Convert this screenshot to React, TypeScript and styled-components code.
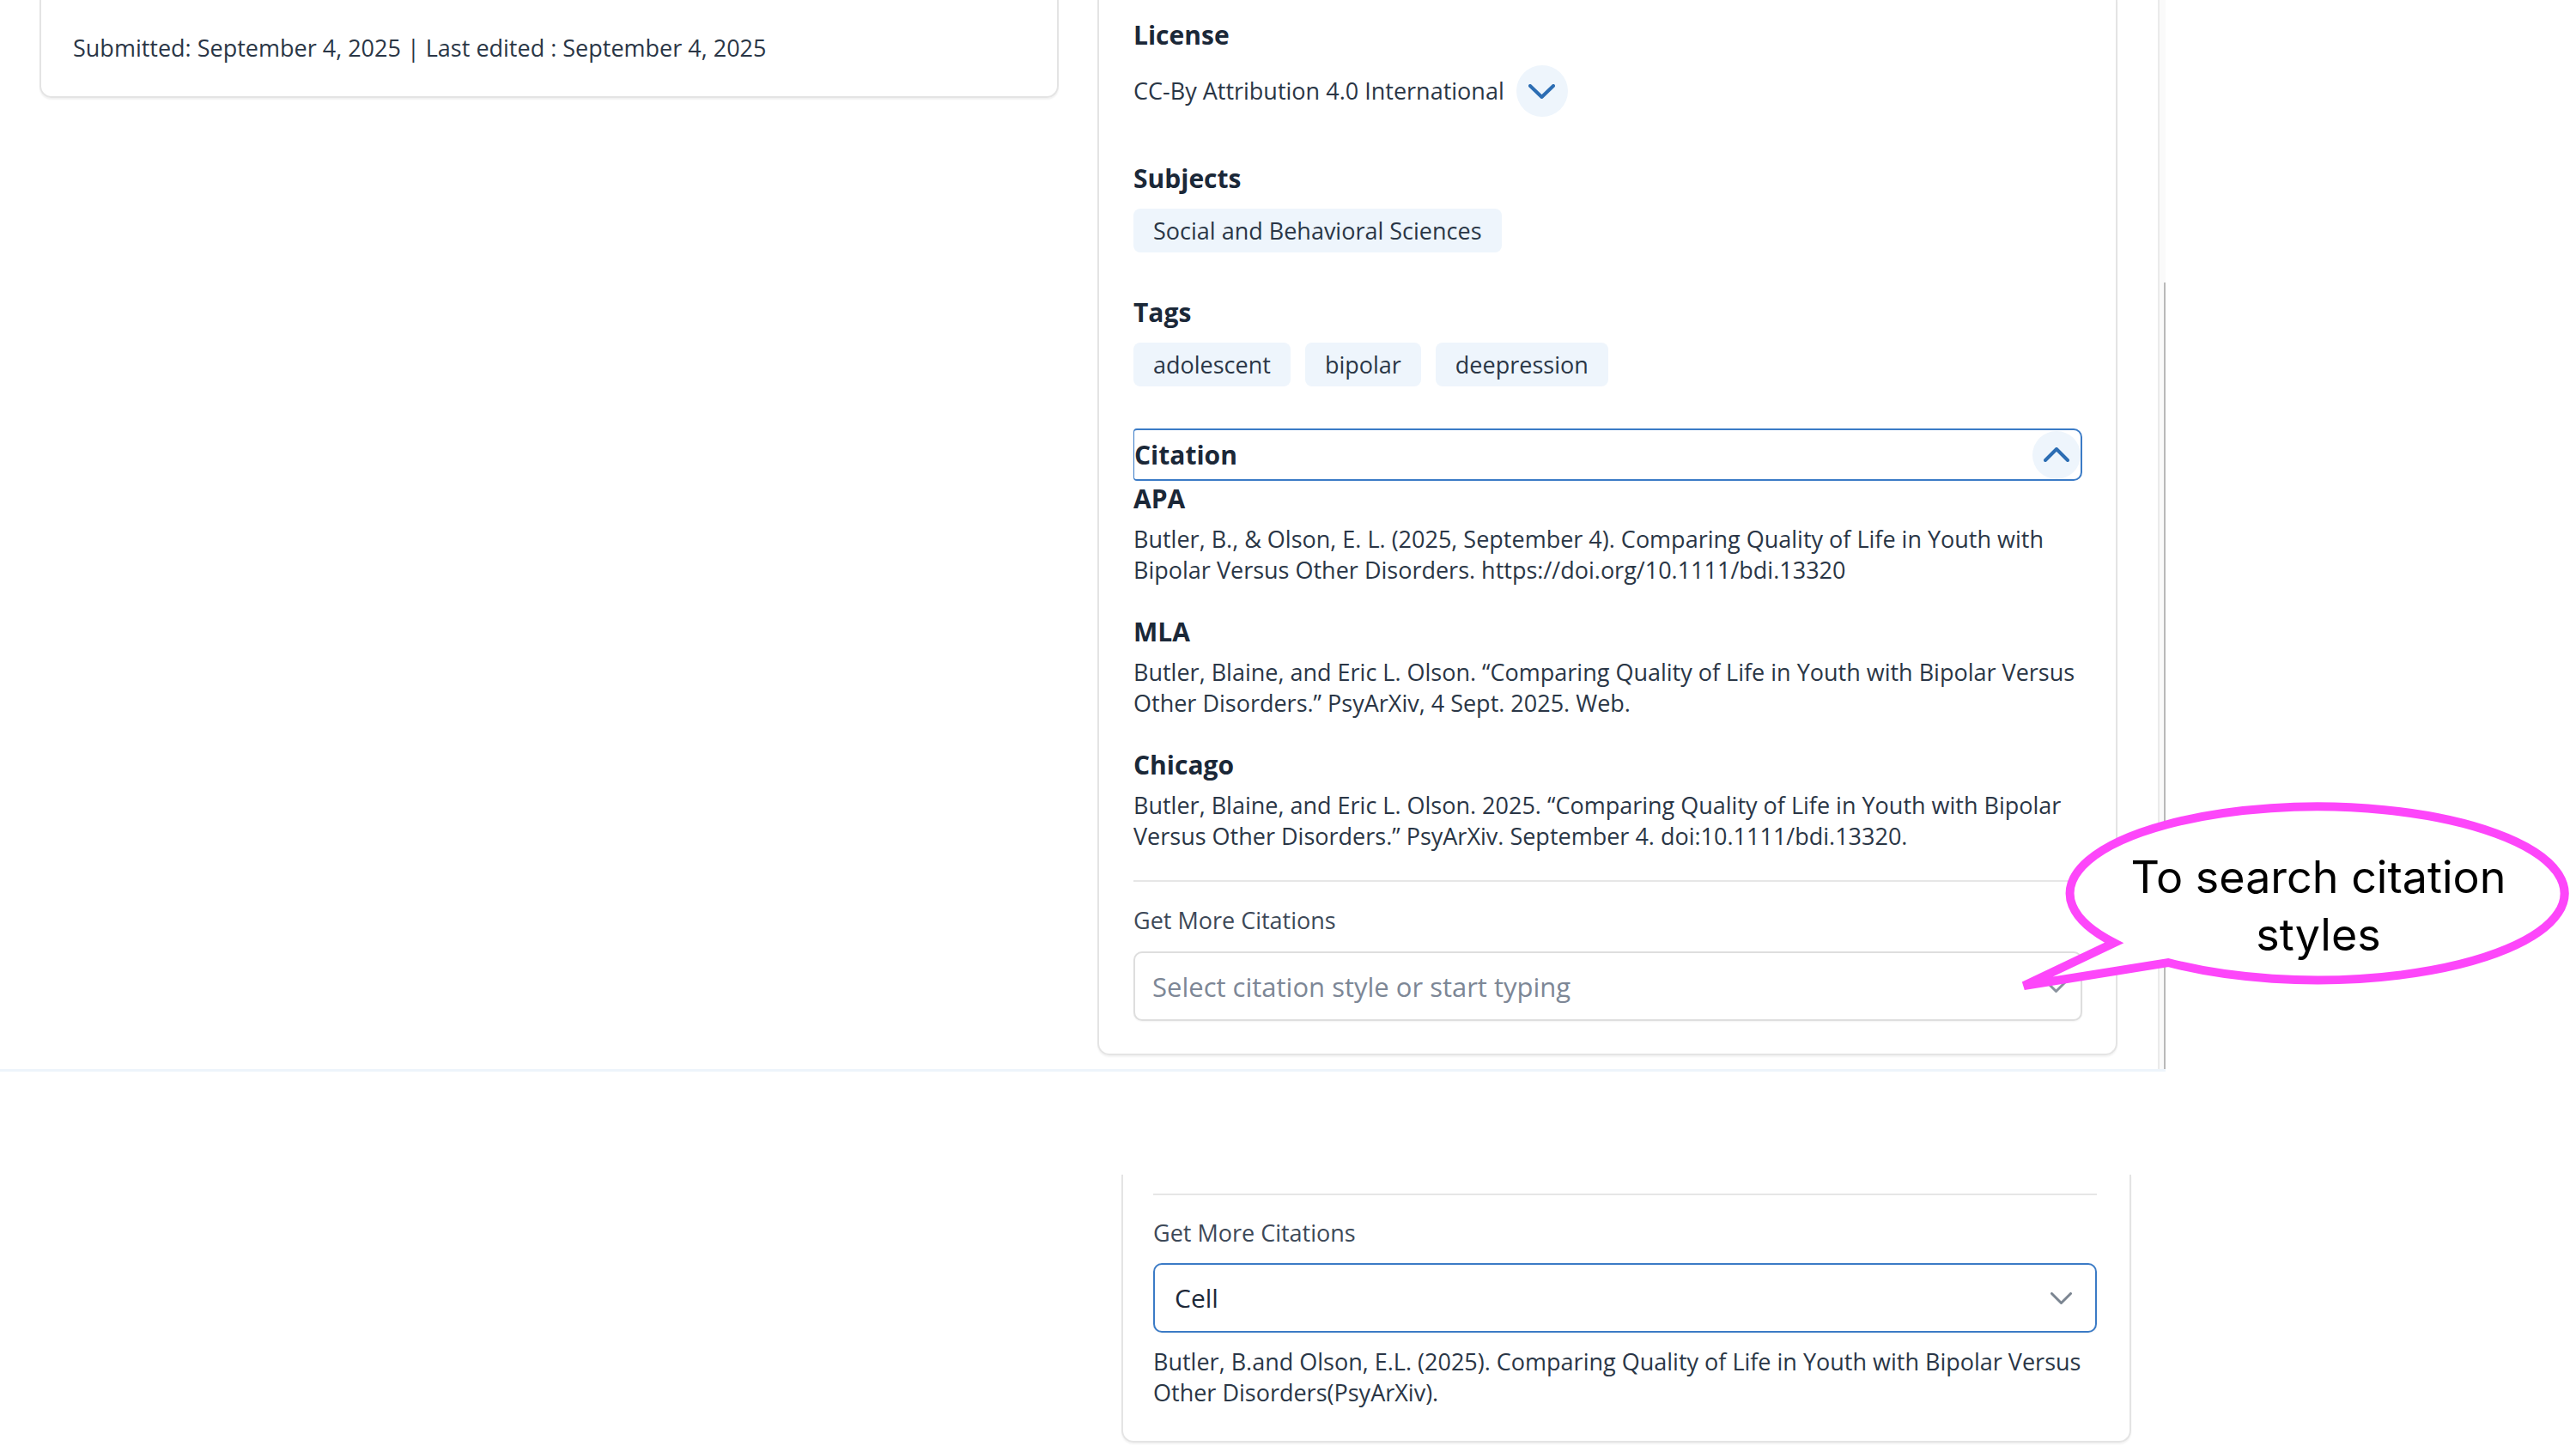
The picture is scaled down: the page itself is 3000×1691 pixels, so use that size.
import styled, {createGlobalStyle} from "styled-components";

const GlobalStyle = createGlobalStyle`
  html, body {
    margin: 0;
    padding: 0;
    background: #ffffff;
  }
  body {
    width: 3000px;
    height: 1691px;
    overflow: hidden;
    font-family: "Open Sans", "Noto Sans", sans-serif;
    color: #2a3646;
  }
  * {
    box-sizing: border-box;
  }
`;

type ChevronProps = { up?: boolean; color: string; w: number; h: number; sw: number };

function Chevron({up, color, w, h, sw}: ChevronProps) {
    const p = sw / 2;
    const top = p;
    const bottom = h + p;
    const points = up
        ? `${p},${bottom} ${w / 2 + p},${top} ${w + p},${bottom}`
        : `${p},${top} ${w / 2 + p},${bottom} ${w + p},${top}`;
    return (
        <svg width={w + sw} height={h + sw} viewBox={`0 0 ${w + sw} ${h + sw}`}>
            <polyline points={points} fill="none" stroke={color} strokeWidth={sw}
                      strokeLinecap="round" strokeLinejoin="round"/>
        </svg>
    );
}

const citations = [
    {
        style: "APA",
        text: "Butler, B., & Olson, E. L. (2025, September 4). Comparing Quality of Life in Youth with Bipolar Versus Other Disorders. https://doi.org/10.1111/bdi.13320",
    },
    {
        style: "MLA",
        text: "Butler, Blaine, and Eric L. Olson. \u201cComparing Quality of Life in Youth with Bipolar Versus Other Disorders.\u201d PsyArXiv, 4 Sept. 2025. Web.",
    },
    {
        style: "Chicago",
        text: "Butler, Blaine, and Eric L. Olson. 2025. \u201cComparing Quality of Life in Youth with Bipolar Versus Other Disorders.\u201d PsyArXiv. September 4. doi:10.1111/bdi.13320.",
    },
];

const tags = ["adolescent", "bipolar", "deepression"];

function App() {
    return (
        <Page>
            <GlobalStyle/>
            <TopShot>
                <MetaCard>
                    Submitted: September 4, 2025 | Last edited : September 4, 2025
                </MetaCard>

                <DetailsCard>
                    <Section $top={0}>
                        <Heading>License</Heading>
                        <LicenseRow>
                            <span>CC-By Attribution 4.0 International</span>
                            <RoundButton $size={60}>
                                <Chevron color="#2c6db3" w={27} h={13} sw={4}/>
                            </RoundButton>
                        </LicenseRow>
                    </Section>

                    <Section $top={52}>
                        <Heading>Subjects</Heading>
                        <ChipRow>
                            <Chip>Social and Behavioral Sciences</Chip>
                        </ChipRow>
                    </Section>

                    <Section $top={50}>
                        <Heading>Tags</Heading>
                        <ChipRow>
                            {tags.map(t => <Chip key={t}>{t}</Chip>)}
                        </ChipRow>
                    </Section>

                    <Section $top={49}>
                        <CollapseHeader>
                            <HeaderTitle>Citation</HeaderTitle>
                            <RoundButton $size={56}>
                                <Chevron up color="#2c6db3" w={26} h={13} sw={4}/>
                            </RoundButton>
                        </CollapseHeader>
                        {citations.map(c => (
                            <CitationBlock key={c.style}>
                                <StyleName>{c.style}</StyleName>
                                <CitationText>{c.text}</CitationText>
                            </CitationBlock>
                        ))}
                        <Divider $top={33}/>
                        <FieldLabel>Get More Citations</FieldLabel>
                        <SelectBox>
                            <Placeholder>Select citation style or start typing</Placeholder>
                            <Chevron color="#8a939e" w={22} h={11} sw={3}/>
                        </SelectBox>
                    </Section>
                </DetailsCard>

                <Spacer/>
                <ScrollTrack>
                    <ScrollThumb/>
                </ScrollTrack>
            </TopShot>

            <ResultClip>
                <Divider $top={0}/>
                <FieldLabel>Get More Citations</FieldLabel>
                <SelectBox $active>
                    <SelectValue>Cell</SelectValue>
                    <Chevron color="#7b8591" w={22} h={11} sw={3}/>
                </SelectBox>
                <CitationText $top={16}>
                    Butler, B.and Olson, E.L. (2025). Comparing Quality of Life in Youth with Bipolar Versus
                    Other Disorders(PsyArXiv).
                </CitationText>
            </ResultClip>

            <Callout>
                <svg width="660" height="240" viewBox="0 0 660 240">
                    <path d="M 122 178 A 288 101 0 1 1 185 201 L 17 228 Z"
                          fill="#ffffff" stroke="#fd46fa" strokeWidth={10} strokeLinejoin="miter"/>
                </svg>
                <CalloutText>
                    To search citation<br/>styles
                </CalloutText>
            </Callout>
        </Page>
    );
}

const Page = styled.div`
  position: relative;
  width: 3000px;
  height: 1691px;
  background: #ffffff;
`

const TopShot = styled.div`
  display: flex;
  align-items: flex-start;
  width: 2522px;
  height: 1248px;
  padding-left: 46px;
  border-bottom: 3px solid #edf4fb;
`

const MetaCard = styled.div`
  display: flex;
  align-items: center;
  flex: none;
  width: 1187px;
  height: 114px;
  padding: 0 37px;
  border: 2px solid #e4e4e4;
  border-top: none;
  border-radius: 0 0 14px 14px;
  box-shadow: 0 2px 2px rgba(0, 0, 0, 0.06);
  font-size: 27px;
  line-height: 36px;
  color: #2a3646;
`

const DetailsCard = styled.div`
  flex: none;
  width: 1188px;
  margin-left: 45px;
  padding: 21px 39px 38px 40px;
  border: 2px solid #e4e4e4;
  border-top: none;
  border-radius: 0 0 14px 14px;
  box-shadow: 0 2px 2px rgba(0, 0, 0, 0.05);
`

const Section = styled.section<{ $top: number }>`
  display: flex;
  flex-direction: column;
  align-items: flex-start;
  margin-top: ${p => p.$top}px;
`

const Heading = styled.h3`
  margin: 0 0 15px;
  font-size: 30px;
  line-height: 40px;
  font-weight: 700;
  color: #1b2838;
`

const LicenseRow = styled.div`
  display: flex;
  align-items: center;
  gap: 14px;
  font-size: 27px;
  line-height: 36px;
  color: #2a3646;
`

const RoundButton = styled.span<{ $size: number }>`
  display: flex;
  align-items: center;
  justify-content: center;
  flex: none;
  width: ${p => p.$size}px;
  height: ${p => p.$size}px;
  border-radius: 50%;
  background: #eef5fc;
`

const ChipRow = styled.div`
  display: flex;
  gap: 17px;
`

const Chip = styled.span`
  padding: 7px 23px;
  border-radius: 8px;
  background: #eef5fc;
  font-size: 27px;
  line-height: 37px;
  color: #2a3646;
`

const CollapseHeader = styled.div`
  display: flex;
  align-items: center;
  justify-content: space-between;
  align-self: stretch;
  height: 61px;
  border: 2px solid #3b7bc6;
  border-left-width: 1px;
  border-radius: 4px 10px 10px 4px;
`

const HeaderTitle = styled.span`
  font-size: 30px;
  line-height: 40px;
  font-weight: 700;
  color: #1b2838;
`

const CitationBlock = styled.div`
  margin-top: 34px;

  ${CollapseHeader} + & {
    margin-top: 1px;
  }
`

const StyleName = styled.div`
  font-size: 30px;
  line-height: 40px;
  font-weight: 700;
  color: #1b2838;
`

const CitationText = styled.p<{ $top?: number }>`
  margin: ${p => p.$top ?? 9}px 0 0;
  font-size: 27px;
  line-height: 36px;
  color: #2a3646;
`

const Divider = styled.hr<{ $top: number }>`
  align-self: stretch;
  width: 100%;
  margin: ${p => p.$top}px 0 0;
  border: none;
  border-top: 2px solid #e6e6e6;
`

const FieldLabel = styled.div`
  margin-top: 27px;
  font-size: 27px;
  line-height: 36px;
  color: #3d4958;
`

const SelectBox = styled.div<{ $active?: boolean }>`
  display: flex;
  align-items: center;
  justify-content: space-between;
  align-self: stretch;
  width: 100%;
  height: 81px;
  margin-top: 18px;
  padding: 0 ${p => p.$active ? 27 : 16}px 0 ${p => p.$active ? 23 : 20}px;
  border: 2px solid ${p => p.$active ? "#3b7bc6" : "#dedede"};
  border-radius: 10px;
  box-shadow: 0 1px 2px rgba(0, 0, 0, 0.05);
  background: #ffffff;
`

const Placeholder = styled.span`
  font-size: 31px;
  color: #7d8796;
`

const SelectValue = styled.span`
  font-size: 30px;
  color: #1d2939;
`

const Spacer = styled.div`
  flex: 1;
`

const ScrollTrack = styled.div`
  display: flex;
  flex-direction: column;
  align-items: flex-end;
  align-self: stretch;
  width: 9px;
  padding-top: 329px;
  border-left: 2px solid #ebebeb;
  background: #fafafa;
`

const ScrollThumb = styled.div`
  flex: 1;
  width: 2px;
  background: #b9b9b9;
`

const ResultClip = styled.div`
  display: flex;
  flex-direction: column;
  align-items: flex-start;
  width: 1176px;
  margin: 120px 0 0 1306px;
  padding: 22px 38px 38px 35px;
  border: 2px solid #e4e4e4;
  border-top: none;
  border-radius: 0 0 14px 14px;
  box-shadow: 0 2px 2px rgba(0, 0, 0, 0.05);

  & ${FieldLabel} {
    margin-top: 26px;
  }

  & ${SelectBox} {
    margin-top: 17px;
  }
`

const Callout = styled.div`
  position: absolute;
  left: 2340px;
  top: 920px;
  width: 660px;
  height: 240px;

  svg {
    position: absolute;
    inset: 0;
  }
`

const CalloutText = styled.div`
  position: absolute;
  left: 0;
  top: 68px;
  width: 720px;
  font-family: Inter, "Liberation Sans", sans-serif;
  font-size: 52px;
  line-height: 67px;
  text-align: center;
  color: #000000;
`

export default App;
